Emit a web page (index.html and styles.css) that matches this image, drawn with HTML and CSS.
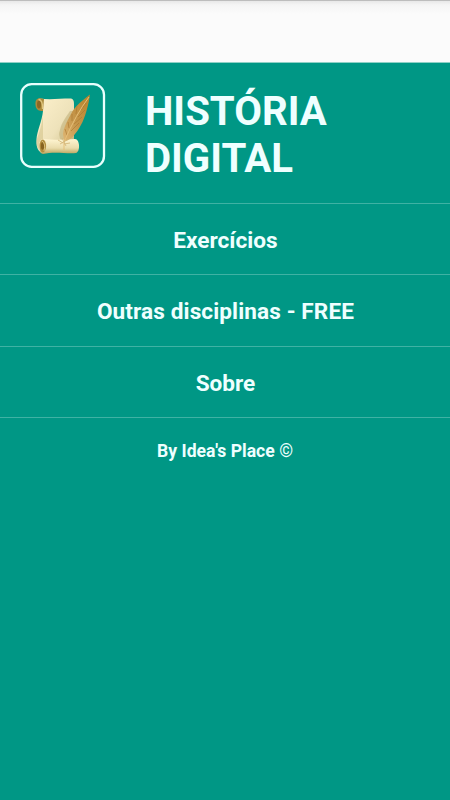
FILE: index.html
```html
<!DOCTYPE html>
<html lang="pt-BR">
<head>
<meta charset="utf-8">
<title>História Digital</title>
<link rel="stylesheet" href="styles.css">
</head>
<body>
<div class="topbar"></div>
<header class="header">
<svg class="logo" viewBox="0 0 86 86" aria-hidden="true">
<defs>
<linearGradient id="paper" x1="0" y1="0" x2="1" y2="1"><stop offset="0" stop-color="#fdf1cc"/><stop offset=".55" stop-color="#eee2ba"/><stop offset="1" stop-color="#c9ba82"/></linearGradient>
<linearGradient id="roll" x1="0" y1="0" x2="0" y2="1"><stop offset="0" stop-color="#fff5d2"/><stop offset=".6" stop-color="#eadcac"/><stop offset="1" stop-color="#b9a35c"/></linearGradient>
<linearGradient id="feather" x1="1" y1="0" x2="0" y2="1"><stop offset="0" stop-color="#b98328"/><stop offset=".55" stop-color="#c5964a"/><stop offset="1" stop-color="#dfb673"/></linearGradient>
</defs>
<rect x="1.2" y="1.2" width="82.8" height="82.6" rx="10.5" fill="none" stroke="#e8fffd" stroke-width="2.3"/>
<path d="M19 15.5C30 17 40 15.5 50 15.5C53.500 15.500 54 18 54 21V57L22 70C17 68 16 62 16.500 56C17 48 22 38 23 28Z" fill="url(#paper)"/>
<path d="M17 56C19 50 22 42 23 32V56L20 67C17 65 16 60 17 56Z" fill="#cdbd82" opacity=".5"/>
<path d="M24 16C17 14 15 17 15.500 22C16 27 19 28 23 28Z" fill="#aa893a"/>
<ellipse cx="19" cy="21.500" rx="2" ry="4" fill="#896722"/>
<path d="M18.500 16.500Q23 17 22.500 26" fill="none" stroke="#dfc57e" stroke-width="1.3"/>
<path d="M50 28C47 33 41 40 40 47Q38 52 41 57H54V28Z" fill="#b9a971" opacity=".5"/>
<path d="M23 56C32 57 44 57 55 56C60 56 60.500 69 56 70C47 71 34 68 23 71Q19 70 19 63Q19 57 23 56Z" fill="url(#roll)"/>
<ellipse cx="22.800" cy="63" rx="3.300" ry="6.500" fill="#b18d3d"/>
<ellipse cx="22.500" cy="63" rx="1.600" ry="3.800" fill="#87631f"/>
<path d="M22 58Q26 61 24 68" fill="none" stroke="#e4cc88" stroke-width=".8"/>
<path d="M70 11.500C63 17 55 23 51 31C48 37 44 43 43 51L44 58Q50 58 55 51C61 44 65 34 67 26Q69 19 70 11.500Z" fill="url(#feather)"/>
<path d="M66 20L61 27M65 27L58 34M62 34L54 41M59 40L51 48M57 23L56 31M52 31L52 38M48 39L49 45M45 46L47 52" fill="none" stroke="#a9762f" stroke-width=".6"/>
<path d="M69 14Q56 31 44 59V67" fill="none" stroke="#e6bf79" stroke-width="1"/>
<path d="M38 57L43 60M40 61L49 56M44 61L50 60M42 55L46 63" fill="none" stroke="#d2b476" stroke-width=".8"/>
</svg>
<h1 class="title">HISTÓRIA<br>DIGITAL</h1>
</header>
<nav class="menu">
<a class="item"><span>Exercícios</span></a>
<a class="item subjects"><span>Outras disciplinas - FREE</span></a>
<a class="item"><span>Sobre</span></a>
</nav>
<footer class="footer"><span>By Idea's Place <span class="mark">©</span></span></footer>
</body>
</html>
```
FILE: styles.css
```css
* { box-sizing: border-box; }
body {
  margin: 0;
  height: 800px;
  overflow: hidden;
  background: #009785;
  color: #efffff;
  font-family: Roboto, sans-serif;
  font-weight: 700;
}
.topbar {
  height: 63px;
  background: linear-gradient(#bdbdbd 0 1px, #e8e8e8 1px, #f5f5f5 5px, #fbfbfb 14px);
  border-bottom: 1px solid #8fd0c6;
}
.header {
  height: 140px;
  display: flex;
  align-items: flex-start;
  padding: 20px 20px 0;
}
.logo { width: 86px; height: 86px; flex: none; }
.title {
  margin: 5px 0 0 39px;
  font-size: 40.2px;
  line-height: 47px;
  font-weight: 700;
}
.menu { border-top: 1px solid #3fb2a4; }
.item {
  height: 71.3px;
  display: flex;
  align-items: center;
  justify-content: center;
  border-bottom: 1px solid #3fb2a4;
  font-size: 22.6px;
  line-height: 28px;
  padding: 4px 0 0 1px;
}
.subjects { letter-spacing: 0.1px; }
.footer {
  display: flex;
  justify-content: center;
  padding-top: 22px;
  font-size: 17.6px;
  line-height: 22px;
}
.mark { font-weight: 400; }
```
